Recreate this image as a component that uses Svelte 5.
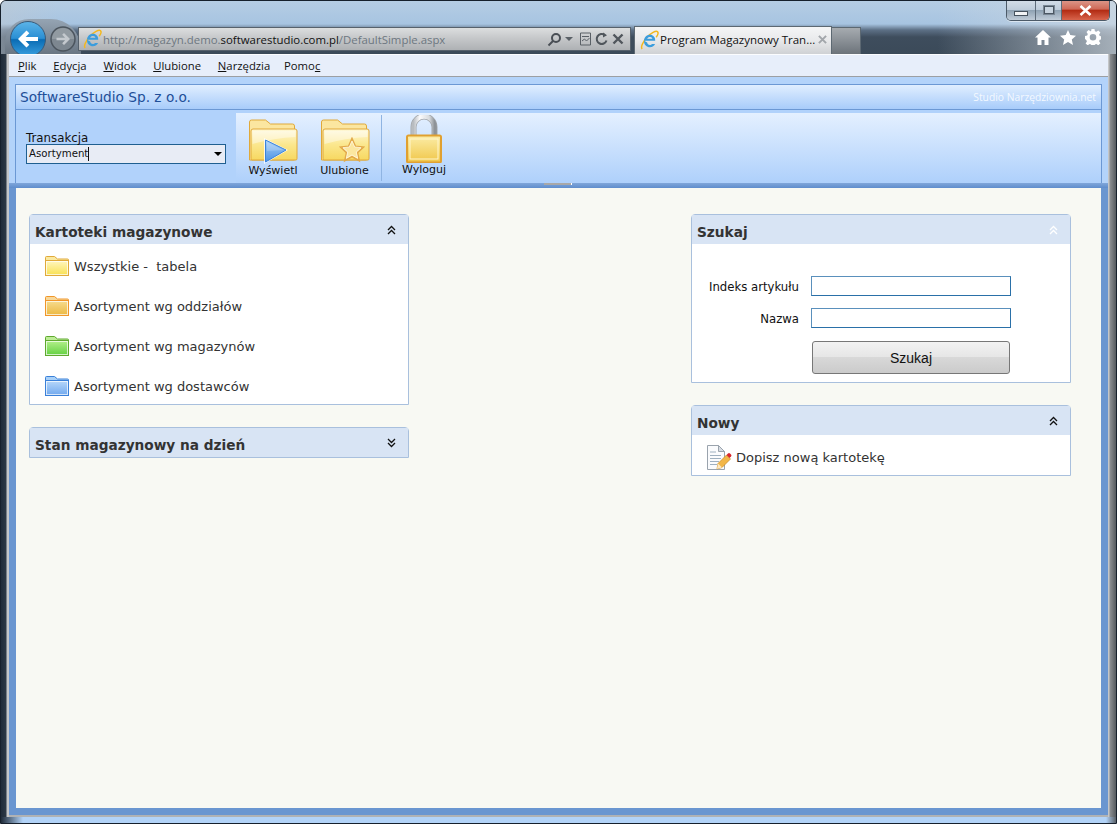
<script lang="ts">
    const menu = [
        { pre: '', key: 'P', post: 'lik' },
        { pre: '', key: 'E', post: 'dycja' },
        { pre: '', key: 'W', post: 'idok' },
        { pre: '', key: 'U', post: 'lubione' },
        { pre: '', key: 'N', post: 'arzędzia' },
        { pre: 'Pomo', key: 'c', post: '' }
    ];

    const folders = [
        { id: 'fy', label: 'Wszystkie -  tabela', edge: '#e0a93a', back: '#fbe9a0', top: '#fff6c0', bottom: '#f8e050' },
        { id: 'fo', label: 'Asortyment wg oddziałów', edge: '#f0962a', back: '#f8d89a', top: '#f6dc90', bottom: '#ecb840' },
        { id: 'fg', label: 'Asortyment wg magazynów', edge: '#5fa82e', back: '#bdec96', top: '#b4f08c', bottom: '#62d040' },
        { id: 'fb', label: 'Asortyment wg dostawców', edge: '#3a80d8', back: '#a8d0f8', top: '#b8d8fa', bottom: '#70a8ee' }
    ];
</script>

{#snippet ie(size: number)}
    <svg class="ie" width={size} height={size} viewBox="0 0 20 20">
        <path d="M3.2 19c-1.8-1.6.6-7.4 4.6-11.6C12 3 16.8.4 18.4 1.6c1.2 1 .3 3.6-1.2 5.6" fill="none" stroke="#f2b820" stroke-width="1.5" />
        <path d="M5 10.800h11.200c.3-3.600-2.200-6-5.200-6-3.400 0-6 2.700-6 6.400 0 3.500 2.600 6 6 6 2.500 0 4.300-1.200 5.100-3.200h-3.200c-.5.700-1 1-2 1-1.600 0-2.600-1.100-2.700-2.400M8.200 8.800c.2-1.100 1.200-1.900 2.700-1.900s2.400.8 2.500 1.900z" fill="#3b9ddd" fill-rule="evenodd" />
    </svg>
{/snippet}

{#snippet chevrons(up: boolean, color: string)}
    <svg class="chev" width="9" height="10" viewBox="0 0 9 10" fill="none" stroke={color} stroke-width="1.300">
        {#if up}
            <path d="M1 5l3.500-3.500L8 5M1 9l3.500-3.500L8 9" />
        {:else}
            <path d="M1 1l3.500 3.500L8 1M1 5l3.500 3.500L8 5" />
        {/if}
    </svg>
{/snippet}

{#snippet bigFolder(id: string)}
    <svg class="bigfolder" width="50" height="44" viewBox="0 0 50 44">
        <defs>
            <linearGradient id={id} x1="0" y1="0" x2="0" y2="1">
                <stop offset="0" stop-color="#fff8d8" />
                <stop offset="0.5" stop-color="#fbe78e" />
                <stop offset="1" stop-color="#f7d860" />
            </linearGradient>
        </defs>
        <path d="M1.500 41V3q0-2 2-2h14l5 4h22q2 0 2 2v34z" fill="#fbe6a0" stroke="#e0a93a" />
        <path d="M4 41q-1 0-1-1.500V12q0-2 2-2h42q2 0 2 2v27.500q0 1.500-1 1.500z" fill={`url(#${id})`} stroke="#e0a93a" />
        <path d="M4.500 12h43v6q-22 1-43 7z" fill="#fff" opacity=".4" />
    </svg>
{/snippet}

<div class="window">
    <header class="chrome">
        <div class="nav">
            <div class="nav-bump"></div>
            <button class="back" aria-label="Wstecz">
                <svg width="36" height="36" viewBox="0 0 36 36">
                    <defs>
                        <linearGradient id="backfill" x1="0" y1="0" x2="0" y2="1">
                            <stop offset="0" stop-color="#5cb4e8" />
                            <stop offset="0.48" stop-color="#2a8fd4" />
                            <stop offset="0.52" stop-color="#0a6cb4" />
                            <stop offset="1" stop-color="#3aa0e0" />
                        </linearGradient>
                    </defs>
                    <circle cx="18" cy="18" r="17.500" fill="url(#backfill)" stroke="#3a5a78" />
                    <path d="M8 18l8.500-8.500 2.800 2.800-3.700 3.700H28v4H15.600l3.700 3.700-2.800 2.800z" fill="#fff" />
                </svg>
            </button>
            <button class="forward" aria-label="Dalej">
                <svg width="26" height="26" viewBox="0 0 26 26">
                    <circle cx="13" cy="13" r="12" fill="#7d8790" stroke="#4c555e" stroke-width="1.500" />
                    <path d="M2 13a11 11 0 0 1 22 0z" fill="#fff" opacity=".16" />
                    <path d="M20 13l-6-6-1.800 1.800 2.900 2.900H6.500v2.600h8.600l-2.900 2.900L14 19z" fill="#c4c9ce" />
                </svg>
            </button>
            <div class="address">
                {@render ie(20)}
                <span class="url">http://magazyn.demo.<b>softwarestudio.com.pl</b>/DefaultSimple.aspx</span>
                <div class="addr-tools">
                    <svg width="15" height="15" viewBox="0 0 15 15" fill="none" stroke="#4a4f55" stroke-width="2"><circle cx="9" cy="6" r="4" /><path d="M6 9l-4.500 4.500" /></svg>
                    <svg width="8" height="5" viewBox="0 0 8 5"><path d="M0 0h8L4 4z" fill="#5a6066" /></svg>
                    <svg class="compat" width="13" height="14" viewBox="0 0 13 14" fill="none" stroke="#5a6066"><path d="M1.500 1h10v12h-10zM3 9l2.500-2 2 2 3-3M3 4.500h7" /></svg>
                    <svg width="14" height="14" viewBox="0 0 14 14" fill="none" stroke="#50565c" stroke-width="2"><path d="M11.500 8.500A5 5 0 1 1 9.800 3" /><path d="M8 .5l4 2.700-4 2.300z" fill="#50565c" stroke="none" /></svg>
                    <svg width="12" height="12" viewBox="0 0 12 12" stroke="#50565c" stroke-width="2.400"><path d="M1.500 1.500l9 9M10.500 1.500l-9 9" /></svg>
                </div>
            </div>
            <div class="tab">
                {@render ie(20)}
                <span class="tab-title">Program Magazynowy Tran...</span>
                <svg class="tab-x" width="9" height="9" viewBox="0 0 10 10" stroke="#a2a6ab" stroke-width="2.200"><path d="M1 1l8 8M9 1l-8 8" /></svg>
            </div>
            <div class="newtab"></div>
            <div class="right-icons">
                <svg width="16" height="15" viewBox="0 0 16 15"><path d="M8 0L0 7.500h2.500V15h4v-5h3v5h4V7.500H16z" fill="#fff" /></svg>
                <svg width="16" height="15" viewBox="0 0 16 15"><path d="M8 0l2.300 5.100 5.700.6-4.200 3.700 1.200 5.600L8 12.100 3 15l1.200-5.600L0 5.700l5.700-.6z" fill="#fff" /></svg>
                <svg width="16" height="16" viewBox="0 0 16 16"><path d="M6.500 0h3l.4 2.200 1.500.6L13.300 1.500l2.100 2.100-1.300 1.900.6 1.500 2.200.4v3l-2.200.4-.6 1.500 1.300 1.900-2.100 2.100-1.900-1.300-1.500.6-.4 2.200h-3l-.4-2.200-1.500-.6-1.900 1.300L.6 14.400l1.300-1.900-.6-1.500L0 10V6.900l2.200-.4.6-1.500-1.300-1.900L3.600 1l1.900 1.300L6.100 2.200zM8 5a3.300 3.300 0 1 0 0 6.600A3.300 3.300 0 0 0 8 5z" fill="#fff" fill-rule="evenodd" /></svg>
            </div>
        </div>
        <div class="controls">
            <div class="ctl min"><i></i></div>
            <div class="ctl max"><i></i></div>
            <div class="ctl close">
                <svg width="15" height="11" viewBox="0 0 15 11" stroke="#fff" stroke-width="2.600"><path d="M2.500 1l10 9M12.500 1l-10 9" /></svg>
            </div>
        </div>
    </header>

    <div class="frame">
        <nav class="menubar">
            {#each menu as item}
                <span>{item.pre}<u>{item.key}</u>{item.post}</span>
            {/each}
        </nav>

        <div class="page">
            <div class="head">
                <div class="head-box">
                    <div class="brand">
                        <span class="company">SoftwareStudio Sp. z o.o.</span>
                        <span class="studio">Studio Narzędziownia.net</span>
                    </div>
                    <div class="ribbon">
                        <div class="trans">
                            <label for="trans">Transakcja</label>
                            <div class="select" id="trans">
                                <span class="value">Asortyment</span>
                                <svg width="8" height="4" viewBox="0 0 8 4"><path d="M0 0h8L4 4z" fill="#000" /></svg>
                            </div>
                        </div>
                        <div class="tools">
                            <div class="tool one">
                                <div class="tool-ico">
                                    {@render bigFolder('big1')}
                                    <svg class="over play" width="26" height="28" viewBox="0 0 26 28">
                                        <defs>
                                            <linearGradient id="playfill" x1="0" y1="0" x2="0" y2="1">
                                                <stop offset="0" stop-color="#a8d0f6" />
                                                <stop offset="1" stop-color="#4a92e4" />
                                            </linearGradient>
                                        </defs>
                                        <path d="M1 1L25 13 1 27z" fill="#fff" opacity=".8" />
                                        <path d="M2.500 3L23 13 2.500 25z" fill="url(#playfill)" stroke="#3a84dc" />
                                        <path d="M4 5v9l16-1z" fill="#fff" opacity=".2" />
                                    </svg>
                                </div>
                                <span>Wyświetl</span>
                            </div>
                            <div class="tool two">
                                <div class="tool-ico">
                                    {@render bigFolder('big2')}
                                    <svg class="over star" width="26" height="26" viewBox="0 0 26 26">
                                        <path d="M13 1.500l3.400 7.700 8.100.9-6 5.500 1.700 8-7.200-4.100-7.200 4.100 1.700-8-6-5.500 8.100-.9z" fill="#fbe7a0" stroke="#e2a94a" stroke-width="1.600" />
                                        <path d="M13 4l2.700 6 6.300.7-4.700 4.300 1.300 6.200L13 18l-5.600 3.200L8.700 15 4 10.700l6.300-.7z" fill="none" stroke="#fff8e0" stroke-width=".8" />
                                    </svg>
                                </div>
                                <span>Ulubione</span>
                            </div>
                            <div class="sep"></div>
                            <div class="tool three">
                                <svg class="lock" width="38" height="48" viewBox="0 0 38 48">
                                    <defs>
                                        <linearGradient id="shackle" x1="0" y1="0" x2="1" y2="0">
                                            <stop offset="0" stop-color="#b8bcc0" />
                                            <stop offset="0.3" stop-color="#fbfbfc" />
                                            <stop offset="0.75" stop-color="#d8dbde" />
                                            <stop offset="1" stop-color="#8e9398" />
                                        </linearGradient>
                                        <linearGradient id="lockbody" x1="0" y1="0" x2="0" y2="1">
                                            <stop offset="0" stop-color="#fbeda8" />
                                            <stop offset="1" stop-color="#f0c648" />
                                        </linearGradient>
                                    </defs>
                                    <path d="M8.500 21V12a10.500 10.500 0 0 1 21 0v9" fill="none" stroke="#a2a6ab" stroke-width="6" />
                                    <path d="M8.500 21V12a10.500 10.500 0 0 1 21 0v9" fill="none" stroke="url(#shackle)" stroke-width="4.600" />
                                    <rect x="2" y="20.500" width="34" height="27" rx="1.500" fill="url(#lockbody)" stroke="#e0a030" stroke-width="2" />
                                    <rect x="5" y="24" width="28" height="20" fill="none" stroke="#fff6cc" />
                                </svg>
                                <span>Wyloguj</span>
                            </div>
                        </div>
                    </div>
                </div>
            </div>
            <div class="grip"><i></i></div>

            <main class="main">
                <div class="col">
                    <section class="panel">
                        <h2>Kartoteki magazynowe {@render chevrons(true, '#111')}</h2>
                        <div class="folders">
                            {#each folders as f}
                                <div class="folder-row">
                                    <svg width="24" height="20" viewBox="0 0 24 20">
                                        <defs>
                                            <linearGradient id={f.id} x1="0" y1="0" x2="0" y2="1">
                                                <stop offset="0" stop-color={f.top} />
                                                <stop offset="1" stop-color={f.bottom} />
                                            </linearGradient>
                                        </defs>
                                        <path d="M.5 19.500V1.500q0-1 1-1h8l3 2.500h10q1 0 1 1v15.500z" fill={f.back} stroke={f.edge} />
                                        <rect x=".5" y="4.500" width="23" height="15" fill={`url(#${f.id})`} stroke={f.edge} />
                                        <rect x="1.500" y="5.500" width="21" height="13" fill="none" stroke="#fff" opacity=".7" />
                                    </svg>
                                    <span>{f.label}</span>
                                </div>
                            {/each}
                        </div>
                    </section>
                    <section class="panel">
                        <h2>Stan magazynowy na dzień {@render chevrons(false, '#111')}</h2>
                    </section>
                </div>

                <div class="col">
                    <section class="panel">
                        <h2>Szukaj {@render chevrons(true, '#fff')}</h2>
                        <div class="search">
                            <span class="lbl">Indeks artykułu</span>
                            <input type="text" aria-label="Indeks artykułu" />
                            <span class="lbl">Nazwa</span>
                            <input type="text" aria-label="Nazwa" />
                            <button class="go">Szukaj</button>
                        </div>
                    </section>
                    <section class="panel">
                        <h2>Nowy {@render chevrons(true, '#111')}</h2>
                        <div class="new-row">
                            <svg width="25" height="25" viewBox="0 0 25 25">
                                <path d="M.5.5h11l6 6v18H.5z" fill="#fafbfd" stroke="#9aa3ad" />
                                <path d="M11.500.5v6h6z" fill="#d8dde4" stroke="#9aa3ad" />
                                <path d="M3 7h6M3 10.500h11M3 13.500h11M3 16.500h9M3 19.500h7" stroke="#9fb0c0" />
                                <path d="M10 24l1-5.500L19.500 10l4 4-8.500 8.500z" fill="#f2b648" stroke="#c98a24" stroke-width=".7" />
                                <path d="M19.500 10l1.500-1.500q1-1 2 0l1 1q1 1 0 2L22.500 13z" fill="#d8262c" />
                                <path d="M10 24l1-5.500 4 4z" fill="#fde8c0" />
                            </svg>
                            <span>Dopisz nową kartotekę</span>
                        </div>
                    </section>
                </div>
            </main>
        </div>
    </div>
    <div class="foot"></div>
</div>

<style>
    :global(body) {
        margin: 0;
        overflow: hidden;
    }
    .window {
        position: relative;
        width: 1117px;
        height: 824px;
        box-sizing: border-box;
        display: flex;
        flex-direction: column;
        overflow: hidden;
        border: 1px solid #16202c;
        border-radius: 6px 6px 0 0;
        font-family: 'DejaVu Sans', Verdana, sans-serif;
        background: linear-gradient(90deg, #1f2b39 0, #2c3845 5px, #c4c6c8 6px, #c4c6c8 1108px, #8b8e91 1109px, #4c5156 1116px);
    }
    .chrome {
        position: relative;
        flex: none;
        height: 53px;
        box-sizing: border-box;
        padding-top: 25px;
        background:
            linear-gradient(90deg, rgba(190, 200, 210, 0.5) 0, transparent 5%, transparent 84%, rgba(210, 218, 225, 0.7) 100%),
            linear-gradient(180deg, #b5cde4 0, #a7c4e1 23px, #5d7086 29px, #3e4d5d 36px, #3b4a59 53px);
    }
    .nav {
        position: relative;
        height: 28px;
        padding-left: 9px;
        display: flex;
        align-items: flex-start;
    }
    /* grey glass hump behind the back and forward buttons */
    .nav-bump {
        position: absolute;
        left: 4px;
        top: -7px;
        width: 76px;
        height: 35px;
        border-radius: 24px 30px 0 0;
        background: linear-gradient(180deg, #95a4b3 0, #6a7683 100%);
    }
    .nav button {
        position: relative;
        padding: 0;
        border: 0;
        background: none;
        display: block;
    }
    .back {
        flex: none;
        width: 36px;
        height: 36px;
        margin-top: -5px;
    }
    .forward {
        flex: none;
        width: 26px;
        height: 26px;
        margin: 0 2px 0 4px;
    }
    .ie {
        flex: none;
    }
    .address {
        position: relative;
        flex: none;
        width: 553px;
        height: 24px;
        box-sizing: border-box;
        margin-top: 1px;
        padding: 0 6px 0 3px;
        display: flex;
        align-items: center;
        gap: 1px;
        background: linear-gradient(180deg, #dcdedf 0, #c6c8ca 45%, #aeb1b4 100%);
        border: 1px solid #56616c;
        font-family: 'Open Sans', sans-serif;
        font-size: 11.400px;
        color: #6d7780;
    }
    .url b {
        font-weight: 400;
        color: #111;
    }
    .addr-tools {
        margin-left: auto;
        display: flex;
        align-items: center;
        gap: 3px;
    }
    .addr-tools .compat {
        margin-left: 3px;
    }
    .tab {
        flex: none;
        width: 198px;
        height: 28px;
        box-sizing: border-box;
        margin-left: 3px;
        padding: 0 4px 2px 4px;
        display: flex;
        align-items: center;
        gap: 1px;
        background: linear-gradient(180deg, #f4f5f6 0, #e8e9eb 50%, #cfd1d4 100%);
        border: 1px solid #5c6872;
        border-bottom: 0;
        font-family: 'Open Sans', sans-serif;
        font-size: 11.500px;
        color: #111;
        white-space: nowrap;
    }
    .tab-title {
        flex: 1;
    }
    .tab-x {
        flex: none;
    }
    .newtab {
        flex: none;
        width: 29px;
        height: 27px;
        box-sizing: border-box;
        margin-top: 1px;
        background: linear-gradient(180deg, #a6abb0 0, #6c737a 100%);
        border: 1px solid #5c6872;
        border-left: 0;
        border-bottom: 0;
    }
    .right-icons {
        margin-left: auto;
        margin-right: 15px;
        padding-top: 3px;
        display: flex;
        align-items: center;
        gap: 9px;
    }
    .controls {
        position: absolute;
        top: -1px;
        right: 6px;
        height: 20px;
        display: flex;
        border: 1px solid #4c5a68;
        border-top: 0;
        border-radius: 0 0 5px 5px;
        overflow: hidden;
        box-shadow: 0 1px 0 rgba(255, 255, 255, 0.5);
    }
    .ctl {
        display: flex;
        align-items: center;
        justify-content: center;
        background: linear-gradient(180deg, #d4dee8 0, #bdcbd9 50%, #8fa2b3 52%, #c0ccd8 100%);
    }
    .min {
        width: 28px;
        border-right: 1px solid #5e6c7a;
    }
    .max {
        width: 25px;
        border-right: 1px solid #5e6c7a;
    }
    .close {
        width: 47px;
        background: linear-gradient(180deg, #dc9a8c 0, #cf6a58 45%, #b32c14 52%, #d8644c 100%);
    }
    .min i {
        width: 12px;
        height: 3px;
        margin-top: 7px;
        background: #f2f4f6;
        border: 1px solid #46525e;
    }
    .max i {
        width: 8px;
        height: 6px;
        background: #c8d4df;
        border: 1px solid #4a5662;
        box-shadow: 0 0 0 1px #7a8794;
    }
    .frame {
        flex: 1;
        min-height: 0;
        display: flex;
        flex-direction: column;
        margin: 0 8px;
    }
    .menubar {
        position: relative;
        flex: none;
        height: 23px;
        box-sizing: border-box;
        padding-left: 9px;
        display: flex;
        align-items: center;
        gap: 16.800px;
        background: #e7eefa;
        border-top: 1px solid #fbfcfe;
        border-bottom: 1px solid #9c9fa3;
        font-family: 'Open Sans', sans-serif;
        font-size: 11.300px;
        color: #111;
    }
    .menubar span:last-child {
        margin-left: -3px;
    }
    .page {
        flex: 1;
        min-height: 0;
        display: flex;
        flex-direction: column;
        background: #6a96d0;
        border-bottom: 2px solid #b0b2b4;
    }
    .foot {
        flex: none;
        height: 6px;
        background: linear-gradient(90deg, #1f2b39 0, #b2d3f8 22px, #b2d3f8 calc(100% - 10px), #5a6066 100%);
    }
    .head {
        flex: none;
        padding: 7px 6px 0;
        background: #b3d3fa;
    }
    .head-box {
        border: 1px solid #6b98d4;
        border-bottom: 0;
    }
    .brand {
        height: 25px;
        box-sizing: border-box;
        padding: 0 5px 0 4px;
        display: flex;
        align-items: center;
        justify-content: space-between;
        background: linear-gradient(180deg, #e0eeff 0, #a8ccfa 100%);
        border-bottom: 1px solid #6b98d4;
    }
    .company {
        font-size: 13.700px;
        color: #1f4f98;
    }
    .studio {
        font-family: 'Open Sans', sans-serif;
        font-size: 10.300px;
        color: #f4f9ff;
    }
    .ribbon {
        height: 73px;
        display: flex;
        background: #b1d2fb;
    }
    .trans {
        flex: none;
        width: 220px;
        box-sizing: border-box;
        padding: 22px 0 0 10px;
    }
    .trans label {
        display: block;
        font-size: 11.800px;
        line-height: 12px;
        color: #111;
    }
    .select {
        width: 200px;
        height: 20px;
        box-sizing: border-box;
        padding: 0 3px 0 2px;
        display: flex;
        align-items: center;
        justify-content: space-between;
        background: #e8ecf5;
        border: 1px solid #1f5f90;
        font-size: 10.200px;
        color: #111;
    }
    .value {
        border-right: 1px solid #111;
        line-height: 14px;
    }
    .tools {
        flex: 1;
        margin-top: 3px;
        display: flex;
        background: linear-gradient(180deg, #e4f0ff 0, #aed0fb 100%);
    }
    .tool {
        flex: none;
        display: flex;
        flex-direction: column;
        align-items: center;
        font-size: 11px;
        color: #111;
    }
    .tool span {
        margin-top: 1px;
    }
    .tool-ico {
        position: relative;
        width: 50px;
        height: 44px;
        margin-top: 6px;
    }
    .over {
        position: absolute;
    }
    .play {
        left: 15px;
        top: 18px;
    }
    .star {
        left: 19px;
        top: 18px;
    }
    .one {
        width: 74px;
    }
    .two {
        width: 69px;
    }
    .sep {
        width: 1px;
        height: 66px;
        margin: 2px 0 0 2px;
        background: #8fb4e2;
    }
    .three {
        width: 60px;
        margin-left: 12px;
    }
    .lock {
        margin-top: 2px;
    }
    .three span {
        margin-top: 0;
    }
    .grip {
        flex: none;
        height: 5px;
        background: linear-gradient(180deg, #7fa6da 0, #5f8dcc 100%);
        display: flex;
        justify-content: center;
    }
    .grip i {
        width: 27px;
        height: 2px;
        margin-left: -1px;
        background: #a8a8a8;
        border-right: 1px solid #fff;
    }
    .main {
        flex: 1;
        min-height: 0;
        margin: 0 7px 7px;
        padding: 26px 30px 0 13px;
        display: flex;
        justify-content: space-between;
        align-items: flex-start;
        background: #f8f9f3;
    }
    .col {
        width: 380px;
        display: flex;
        flex-direction: column;
        gap: 22px;
    }
    .panel {
        background: #fff;
        border: 1px solid #a9c0dd;
        border-radius: 4px 4px 0 0;
    }
    .panel h2 {
        margin: 0;
        height: 29px;
        box-sizing: border-box;
        padding: 4px 10px 0 5px;
        display: flex;
        align-items: center;
        justify-content: space-between;
        background: #d8e4f4;
        font-size: 13.700px;
        line-height: 20px;
        font-weight: 700;
        color: #333;
    }
    .chev {
        margin: 0 2px 3px 0;
    }
    .folders {
        padding: 12px 0 8px 15px;
        display: flex;
        flex-direction: column;
        gap: 20px;
    }
    .folder-row {
        height: 20px;
        display: flex;
        align-items: center;
        gap: 5px;
        font-size: 13px;
        color: #333;
        white-space: pre;
    }
    .search {
        padding: 32px 0 8px;
        display: grid;
        grid-template-columns: 107px 200px;
        column-gap: 12px;
        row-gap: 12px;
        align-items: center;
    }
    .lbl {
        padding-top: 1px;
        text-align: right;
        font-size: 11.700px;
        color: #111;
    }
    .search input {
        width: 200px;
        height: 20px;
        box-sizing: border-box;
        padding: 0;
        margin: 0;
        background: #fff;
        border: 1px solid #2a70a8;
        border-top-color: #5a90bc;
        border-left-color: #5a90bc;
    }
    .go {
        grid-column: 2;
        width: 198px;
        height: 33px;
        margin: 1px 0 0 1px;
        padding: 0;
        background: linear-gradient(180deg, #f2f2f2 0, #e6e6e6 48%, #d8d8d8 50%, #cbcbcb 100%);
        border: 1px solid #777;
        border-radius: 3px;
        font-family: 'Liberation Sans', Arial, sans-serif;
        font-size: 14px;
        color: #111;
    }
    .new-row {
        height: 40px;
        box-sizing: border-box;
        padding: 4px 0 0 15px;
        display: flex;
        align-items: center;
        gap: 4px;
        font-size: 13px;
        color: #333;
    }
</style>
